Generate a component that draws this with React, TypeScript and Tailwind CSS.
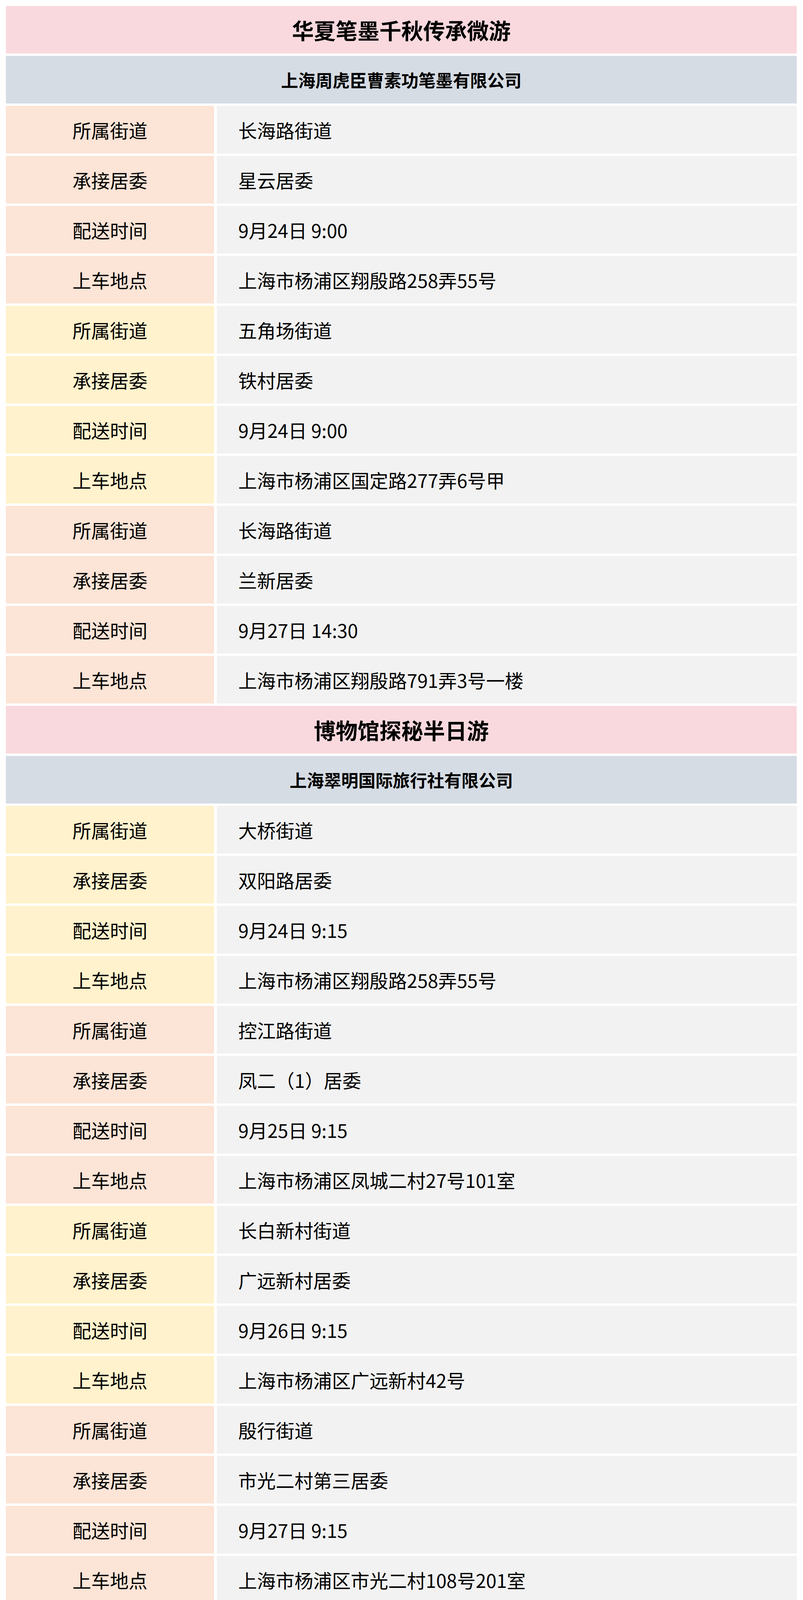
import React from "react";

type Row = [string, string];

type Section = {
  title: string;
  company: string;
  groups: { tone: "peach" | "yellow"; rows: Row[] }[];
};

const stop = (street: string, committee: string, time: string, place: string): Row[] => [
  ["所属街道", street],
  ["承接居委", committee],
  ["配送时间", time],
  ["上车地点", place],
];

const SECTIONS: Section[] = [
  {
    title: "华夏笔墨千秋传承微游",
    company: "上海周虎臣曹素功笔墨有限公司",
    groups: [
      { tone: "peach", rows: stop("长海路街道", "星云居委", "9月24日 9:00", "上海市杨浦区翔殷路258弄55号") },
      { tone: "yellow", rows: stop("五角场街道", "铁村居委", "9月24日 9:00", "上海市杨浦区国定路277弄6号甲") },
      { tone: "peach", rows: stop("长海路街道", "兰新居委", "9月27日 14:30", "上海市杨浦区翔殷路791弄3号一楼") },
    ],
  },
  {
    title: "博物馆探秘半日游",
    company: "上海翠明国际旅行社有限公司",
    groups: [
      { tone: "yellow", rows: stop("大桥街道", "双阳路居委", "9月24日 9:15", "上海市杨浦区翔殷路258弄55号") },
      { tone: "peach", rows: stop("控江路街道", "凤二（1）居委", "9月25日 9:15", "上海市杨浦区凤城二村27号101室") },
      { tone: "yellow", rows: stop("长白新村街道", "广远新村居委", "9月26日 9:15", "上海市杨浦区广远新村42号") },
      { tone: "peach", rows: stop("殷行街道", "市光二村第三居委", "9月27日 9:15", "上海市杨浦区市光二村108号201室") },
    ],
  },
];

const FONT = "font-['Microsoft_YaHei','Noto_Sans_CJK_SC',sans-serif]";

export default function App() {
  return (
    <div className={`min-h-[4120px] bg-white pt-[15px] pb-[15px] pl-[15px] pr-[16px] text-black ${FONT}`}>
      <div className="grid grid-cols-[533px_1fr] gap-x-[7px] gap-y-[6px] auto-rows-[122px]">
        {SECTIONS.map((s) => (
          <React.Fragment key={s.title}>
            <div className="col-span-2 flex items-center justify-center bg-[#fad9de] text-[56px] font-bold">
              {s.title}
            </div>
            <div className="col-span-2 flex items-center justify-center bg-[#d6dce4] text-[44px] font-bold">
              {s.company}
            </div>
            {s.groups.map((g, gi) =>
              g.rows.map(([label, value], ri) => (
                <React.Fragment key={`${gi}-${ri}`}>
                  <div
                    className={`flex items-center justify-center text-[48px] ${
                      g.tone === "peach" ? "bg-[#fce4d6]" : "bg-[#fff2cc]"
                    }`}
                  >
                    {label}
                  </div>
                  <div className="flex items-center bg-[#f2f2f2] pl-[55px] text-[48px]">{value}</div>
                </React.Fragment>
              ))
            )}
          </React.Fragment>
        ))}
      </div>
    </div>
  );
}
